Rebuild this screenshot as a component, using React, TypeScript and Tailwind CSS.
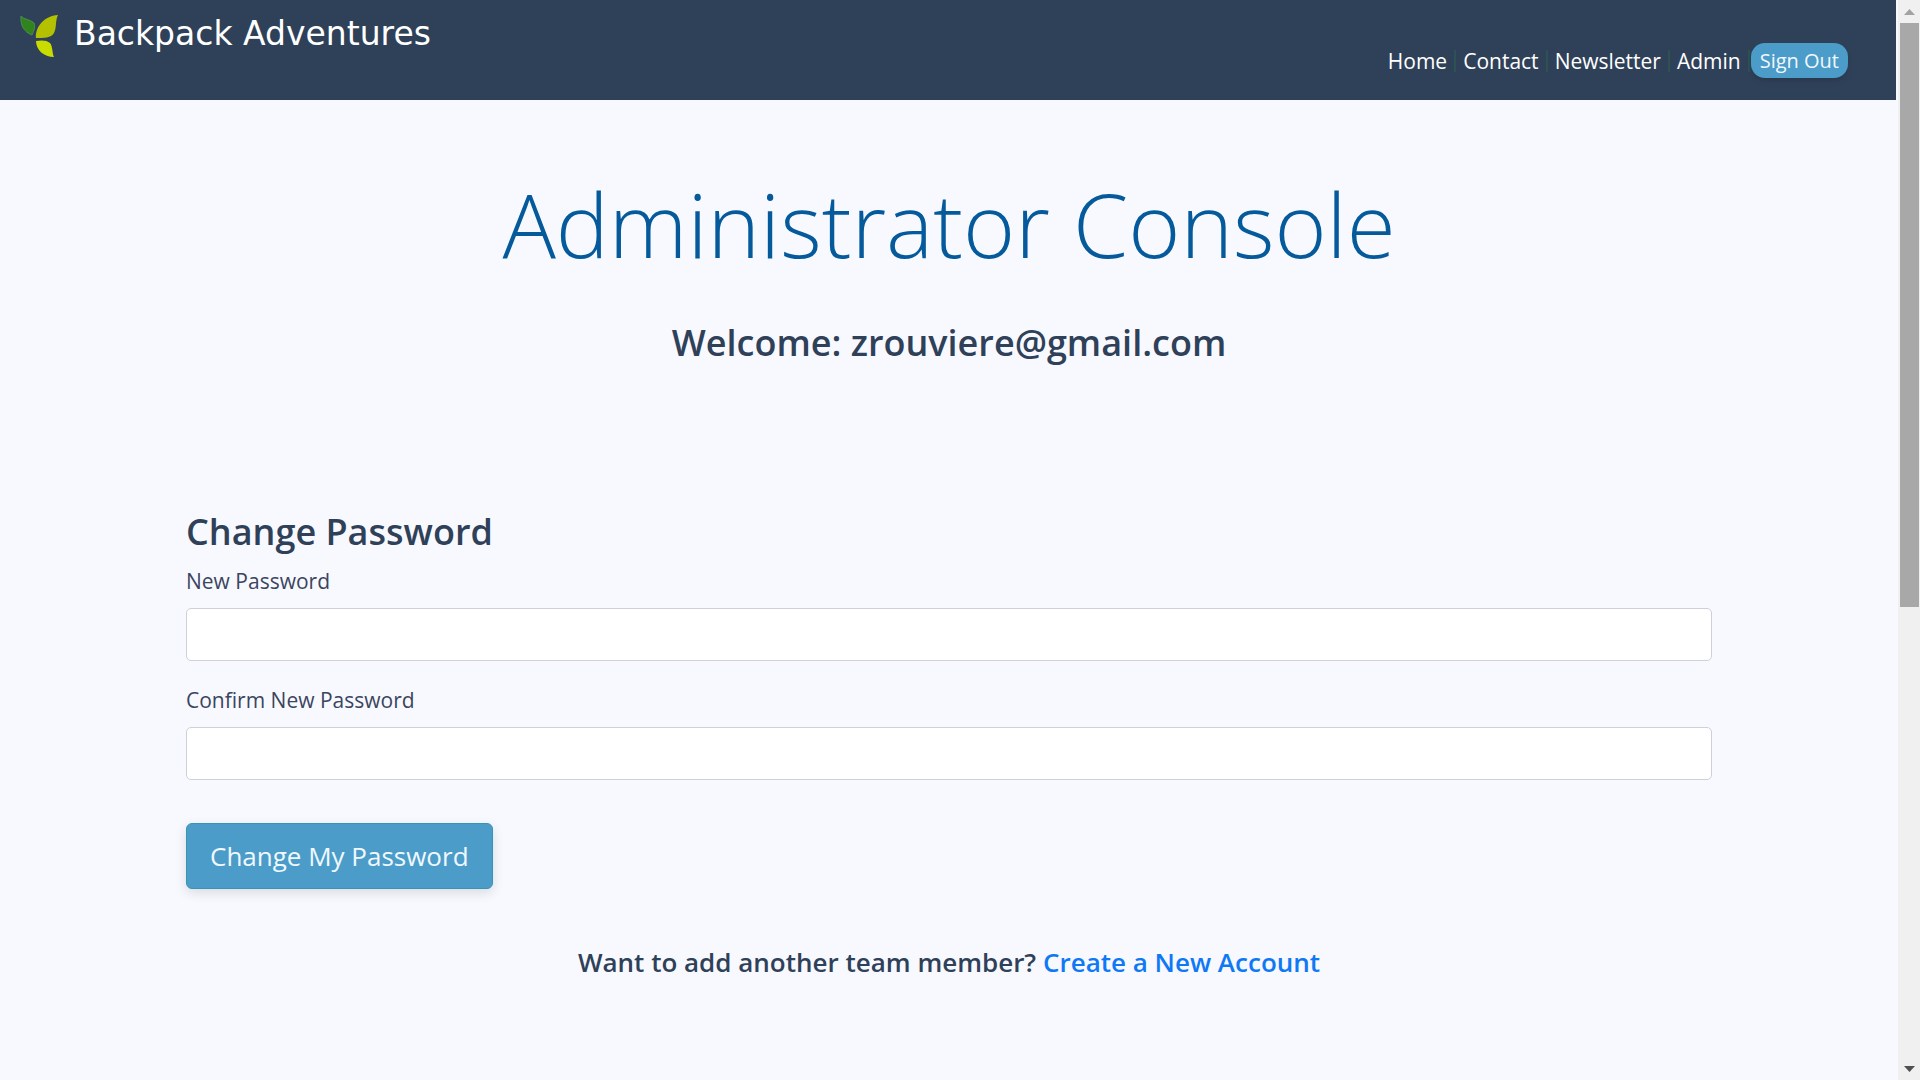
import React from "react";

const links = ["Home", "Contact", "Newsletter", "Admin"];

function Logo() {
  return (
    <svg className="h-[44px] w-[40px]" viewBox="0 0 40 44" aria-hidden="true">
      <path d="M1 1C4 5 10 4 14 8C16 13 13 17 12 20C4 17 0 10 1 1Z" fill="#2f841c" stroke="#4f8a55" strokeWidth="1" />
      <path d="M38 0C35 6 37 12 34 18C31 23 24 23 16 23C15 12 24 1 38 0Z" fill="#b3c100" />
      <path d="M16 26C21 25 27 25 30 28C33 32 32 38 34 42C24 42 16 35 16 26Z" fill="#c8dc00" />
    </svg>
  );
}

function Header() {
  return (
    <header className="mr-[2px] flex h-[100px] items-start justify-between bg-[#2f4159] pr-[48px] pl-[20px]">
      <a href="#" className="flex gap-[14px] pt-[15px] font-['DejaVu_Sans',sans-serif] text-[33px] leading-[38px] text-white">
        <Logo />
        Backpack Adventures
      </a>
      <nav className="flex items-center pt-[43px] text-[21px] leading-[35px] text-white">
        {links.map((l) => (
          <React.Fragment key={l}>
            <a href="#" className="pt-[2px] leading-[33px]">{l}</a>
            <span className="mx-[7px] h-[22px] w-[2px] bg-[#2d5253] last-of-type:mr-[1px]" />
          </React.Fragment>
        ))}
        <button className="h-[35px] rounded-[14px] bg-[#4b9cc8] px-[9px] text-[20px] text-[#f0f8ff] shadow-md">Sign Out</button>
      </nav>
    </header>
  );
}

function Field({ id, label }: { id: string; label: string }) {
  return (
    <div className="mb-[24px]">
      <label htmlFor={id} className="mb-[11px] block text-[21px] leading-[31px] text-[#3b4560]">
        {label}
      </label>
      <input id={id} type="password" className="block h-[53px] w-full rounded-[5px] border border-[#ced0da] bg-white px-4 text-[21px]" />
    </div>
  );
}

function Scrollbar() {
  return (
    <div className="flex w-[22px] shrink-0 flex-col items-center bg-[#f0f0f0]" aria-hidden="true">
      <svg className="h-[23px] w-[22px]" viewBox="0 0 22 23">
        <path d="M6 15L11.500 9L17 15Z" fill="#a3a3a3" />
      </svg>
      <div className="h-[584px] w-[19px] bg-[#a8a8a8]" />
      <div className="grow" />
      <svg className="h-[23px] w-[22px]" viewBox="0 0 22 23">
        <path d="M6 9L11.500 15L17 9Z" fill="#505050" />
      </svg>
    </div>
  );
}

export default function App() {
  return (
    <div className="flex min-h-screen bg-[#f8f9ff] font-['Open_Sans',sans-serif] text-[#2f4159]">
      <div className="min-w-0 grow">
        <Header />
        <main className="px-[186px] pt-[66px]">
          <h1 className="text-center text-[89px] leading-[116px] font-light text-[#055a9c]">Administrator Console</h1>
          <h2 className="mt-[36px] text-center text-[36px] leading-[50px] font-semibold">Welcome: zrouviere@gmail.com</h2>
          <form className="mt-[139px]" onSubmit={(e) => e.preventDefault()}>
            <h2 className="mb-[9px] text-[36px] leading-[50px] font-semibold">Change Password</h2>
            <Field id="new-password" label="New Password" />
            <Field id="confirm-password" label="Confirm New Password" />
            <button className="mt-[19px] h-[66px] rounded-[6px] border border-[#3596b4] bg-[#4b9cc8] px-[23px] text-[26px] text-[#f0f8ff] shadow-[0_4px_12px_rgba(0,0,0,0.12)]">
              Change My Password
            </button>
          </form>
          <p className="mt-[55px] text-center text-[26px] leading-[36px] font-semibold">
            Want to add another team member?{" "}
            <a href="#" className="text-[#0f78f5]">Create a New Account</a>
          </p>
        </main>
      </div>
      <Scrollbar />
    </div>
  );
}
